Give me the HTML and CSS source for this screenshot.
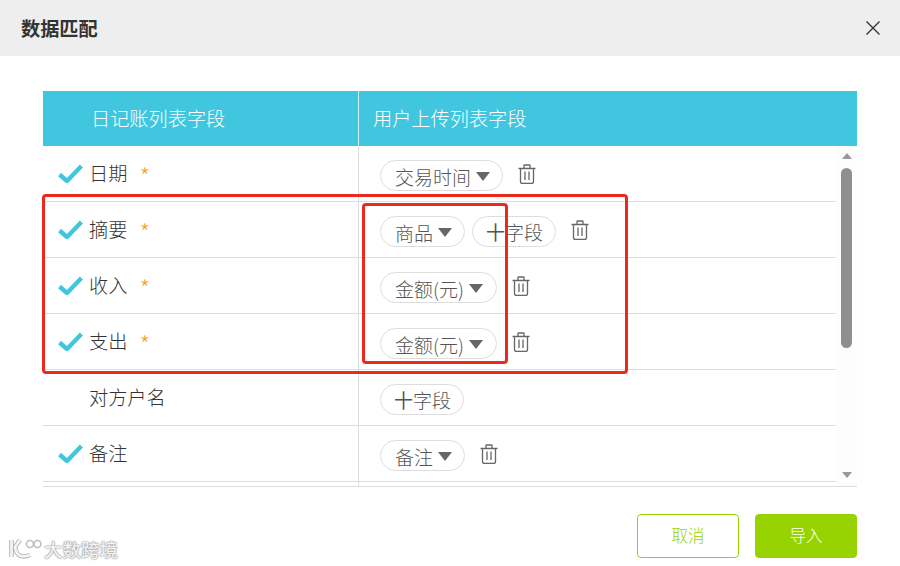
FILE: index.html
```html
<!DOCTYPE html>
<html lang="zh">
<head>
<meta charset="utf-8">
<title>数据匹配</title>
<link rel="stylesheet" href="styles.css">
</head>
<body>
<svg width="0" height="0" class="defs">
  <symbol id="check" viewBox="0 0 25 19"><path d="M1.5 10.5 L9 17 L23.5 2" fill="none" stroke="#40c6de" stroke-width="4.4"/></symbol>
  <symbol id="trash" viewBox="0 0 18 20"><path d="M.5 4.5H17.5M6 4V1.500Q6 1 6.500 1H11.500Q12 1 12 1.500V4M2.500 5V17.500Q2.500 19.500 4.500 19.500H13.500Q15.500 19.500 15.500 17.500V5M7 7.500V16M11 7.500V16" fill="none" stroke="#666" stroke-width="1.3"/></symbol>
</svg>
<div class="dialog">
  <header class="head">
    <h1 class="title">数据匹配</h1>
    <svg class="close" width="16" height="16" viewBox="0 0 16 16"><path d="M1.500 1.500L14.500 14.500M14.500 1.500L1.500 14.500" stroke="#333" stroke-width="1.4" fill="none"/></svg>
  </header>
  <main class="content">
    <div class="thead">
      <div class="th th-left">日记账列表字段</div>
      <div class="th th-right">用户上传列表字段</div>
    </div>
    <div class="tbody">
      <div class="rows">
        <div class="row">
          <div class="cell-left"><svg class="check"><use href="#check"/></svg><span class="name">日期</span><span class="star">*</span></div>
          <div class="cell-right"><span class="pill">交易时间<i class="caret"></i></span><svg class="trash"><use href="#trash"/></svg></div>
        </div>
        <div class="row">
          <div class="cell-left"><svg class="check"><use href="#check"/></svg><span class="name">摘要</span><span class="star">*</span></div>
          <div class="cell-right"><span class="pill">商品<i class="caret"></i></span><span class="pill pill-add"><b class="plus">十</b>字段</span><svg class="trash"><use href="#trash"/></svg></div>
        </div>
        <div class="row">
          <div class="cell-left"><svg class="check"><use href="#check"/></svg><span class="name">收入</span><span class="star">*</span></div>
          <div class="cell-right"><span class="pill pill-wide">金额(元)<i class="caret"></i></span><svg class="trash"><use href="#trash"/></svg></div>
        </div>
        <div class="row">
          <div class="cell-left"><svg class="check"><use href="#check"/></svg><span class="name">支出</span><span class="star">*</span></div>
          <div class="cell-right"><span class="pill pill-wide">金额(元)<i class="caret"></i></span><svg class="trash"><use href="#trash"/></svg></div>
        </div>
        <div class="row">
          <div class="cell-left cell-nocheck"><span class="name">对方户名</span></div>
          <div class="cell-right"><span class="pill pill-add"><b class="plus">十</b>字段</span></div>
        </div>
        <div class="row">
          <div class="cell-left"><svg class="check"><use href="#check"/></svg><span class="name">备注</span></div>
          <div class="cell-right"><span class="pill">备注<i class="caret"></i></span><svg class="trash"><use href="#trash"/></svg></div>
        </div>
        <div class="row">
          <div class="cell-left"></div>
          <div class="cell-right"></div>
        </div>
      </div>
      <div class="scrollbar">
        <i class="arrow-up"></i>
        <i class="thumb"></i>
        <i class="arrow-down"></i>
      </div>
    </div>
  </main>
  <footer class="foot">
    <button class="btn btn-ghost">取消</button>
    <button class="btn btn-solid">导入</button>
  </footer>
  <div class="mark mark-outer"></div>
  <div class="mark mark-inner"></div>
  <div class="watermark">
    <svg class="mark-logo" width="36" height="22" viewBox="0 0 36 22"><path d="M3.500 2V19M12 2L7 9Q9 22 22 17" fill="none" stroke="#b0b0b0" stroke-width="4.500"/><path d="M3.500 2V19M12 2L7 9Q9 22 22 17" fill="none" stroke="#f4f4f4" stroke-width="2.800"/><circle cx="22" cy="6" r="3.500" fill="none" stroke="#bdbdbd" stroke-width="1.600"/><circle cx="29.500" cy="6" r="3.500" fill="none" stroke="#bdbdbd" stroke-width="1.600"/></svg>
    <span class="mark-text">大数跨境</span>
  </div>
</div>
</body>
</html>
```
FILE: styles.css
```css
* { box-sizing: border-box; }
html, body { margin: 0; padding: 0; background: #fff; }
body { font-family: "Noto Sans CJK SC", "Liberation Sans", sans-serif; color: #444; overflow: hidden; }
.defs { position: absolute; }
.dialog { position: relative; width: 900px; height: 566px; display: flex; flex-direction: column; }
.head { height: 56px; background: #eee; display: flex; align-items: center; justify-content: space-between; padding: 0 19px 0 21px; flex: none; }
.title { margin: 0; font-size: 19.2px; font-weight: 700; color: #333; line-height: 56px; }
.close { display: block; }
.content { margin: 35px 43px 0; flex: none; }
.thead { display: flex; height: 55px; background: #40c6de; color: #fff; font-size: 19.2px; font-weight: 300; }
.th { line-height: 55px; }
.th-left { width: 316px; padding-left: 48px; border-right: 1px solid #d8eef3; }
.th-right { padding-left: 14px; }
.tbody { display: flex; height: 341px; overflow: hidden; border-bottom: 1px solid #ddd; }
.rows { width: 793px; flex: none; }
.row { display: flex; height: 56px; border-bottom: 1px solid #ddd; }
.cell-left { width: 316px; flex: none; display: flex; align-items: center; padding: 0 0 2px 15px; border-right: 1px solid #ddd; font-size: 19.2px; font-weight: 300; color: #333; }
.cell-nocheck { padding-left: 47px; }
.check { width: 25px; height: 19px; flex: none; margin: 1px 7px 0 0; }
.name { line-height: 54px; margin-left: -1px; }
.star { color: #f5a623; font-size: 24px; margin-left: 12px; line-height: 54px; position: relative; top: 3px; }
.cell-right { flex: 1; display: flex; align-items: flex-start; padding: 14px 0 0 21px; }
.pill { display: inline-flex; align-items: center; height: 31px; padding: 2px 12px 0 14px; border: 1px solid #ddd; border-radius: 16px; font-size: 19px; font-weight: 300; color: #555; white-space: nowrap; }
.pill-wide { padding-right: 13px; }
.pill-add { padding: 0 12px 0 13px; margin-left: 7px; }
.cell-right > .pill-add:first-child { margin-left: 0; }
.plus { font-weight: 400; font-style: normal; color: #555; }
.caret { display: inline-block; width: 0; height: 0; border-left: 7px solid transparent; border-right: 7px solid transparent; border-top: 9px solid #666; margin-left: 5px; }
.trash { width: 18px; height: 20px; flex: none; margin: 4px 0 0 15px; }
.scrollbar { flex: 1; position: relative; background: #fdfdfd; display: flex; flex-direction: column; align-items: center; padding-top: 7px; }
.arrow-up { width: 0; height: 0; border-left: 5.500px solid transparent; border-right: 5.500px solid transparent; border-bottom: 6px solid #999; flex: none; }
.thumb { width: 11px; height: 180px; border-radius: 6px; background: #8f8f8f; margin-top: 9px; flex: none; }
.arrow-down { width: 0; height: 0; border-left: 5.500px solid transparent; border-right: 5.500px solid transparent; border-top: 6px solid #999; margin-top: 124px; flex: none; }
.foot { display: flex; justify-content: flex-end; gap: 16px; padding: 27px 43px 0; }
.btn { width: 102px; height: 44px; border-radius: 4px; font-family: inherit; font-size: 16.500px; font-weight: 300; padding: 0 0 2px; }
.btn-ghost { background: #fff; border: 1px solid #97d300; color: #97d300; }
.btn-solid { background: #97d300; border: 1px solid #97d300; color: #fff; }
.mark { position: absolute; border: 3px solid #ea2a1e; border-radius: 4px; pointer-events: none; }
.mark-outer { left: 42px; top: 194px; width: 586px; height: 180px; }
.mark-inner { left: 362px; top: 203px; width: 146px; height: 161px; }
.watermark { position: absolute; left: 8px; top: 538px; display: flex; align-items: center; }
.mark-text { font-size: 18.500px; font-weight: 500; color: #f2f2f2; line-height: 22px; text-shadow: 0 0 2px #888, 0 0 1px #888; }
```
